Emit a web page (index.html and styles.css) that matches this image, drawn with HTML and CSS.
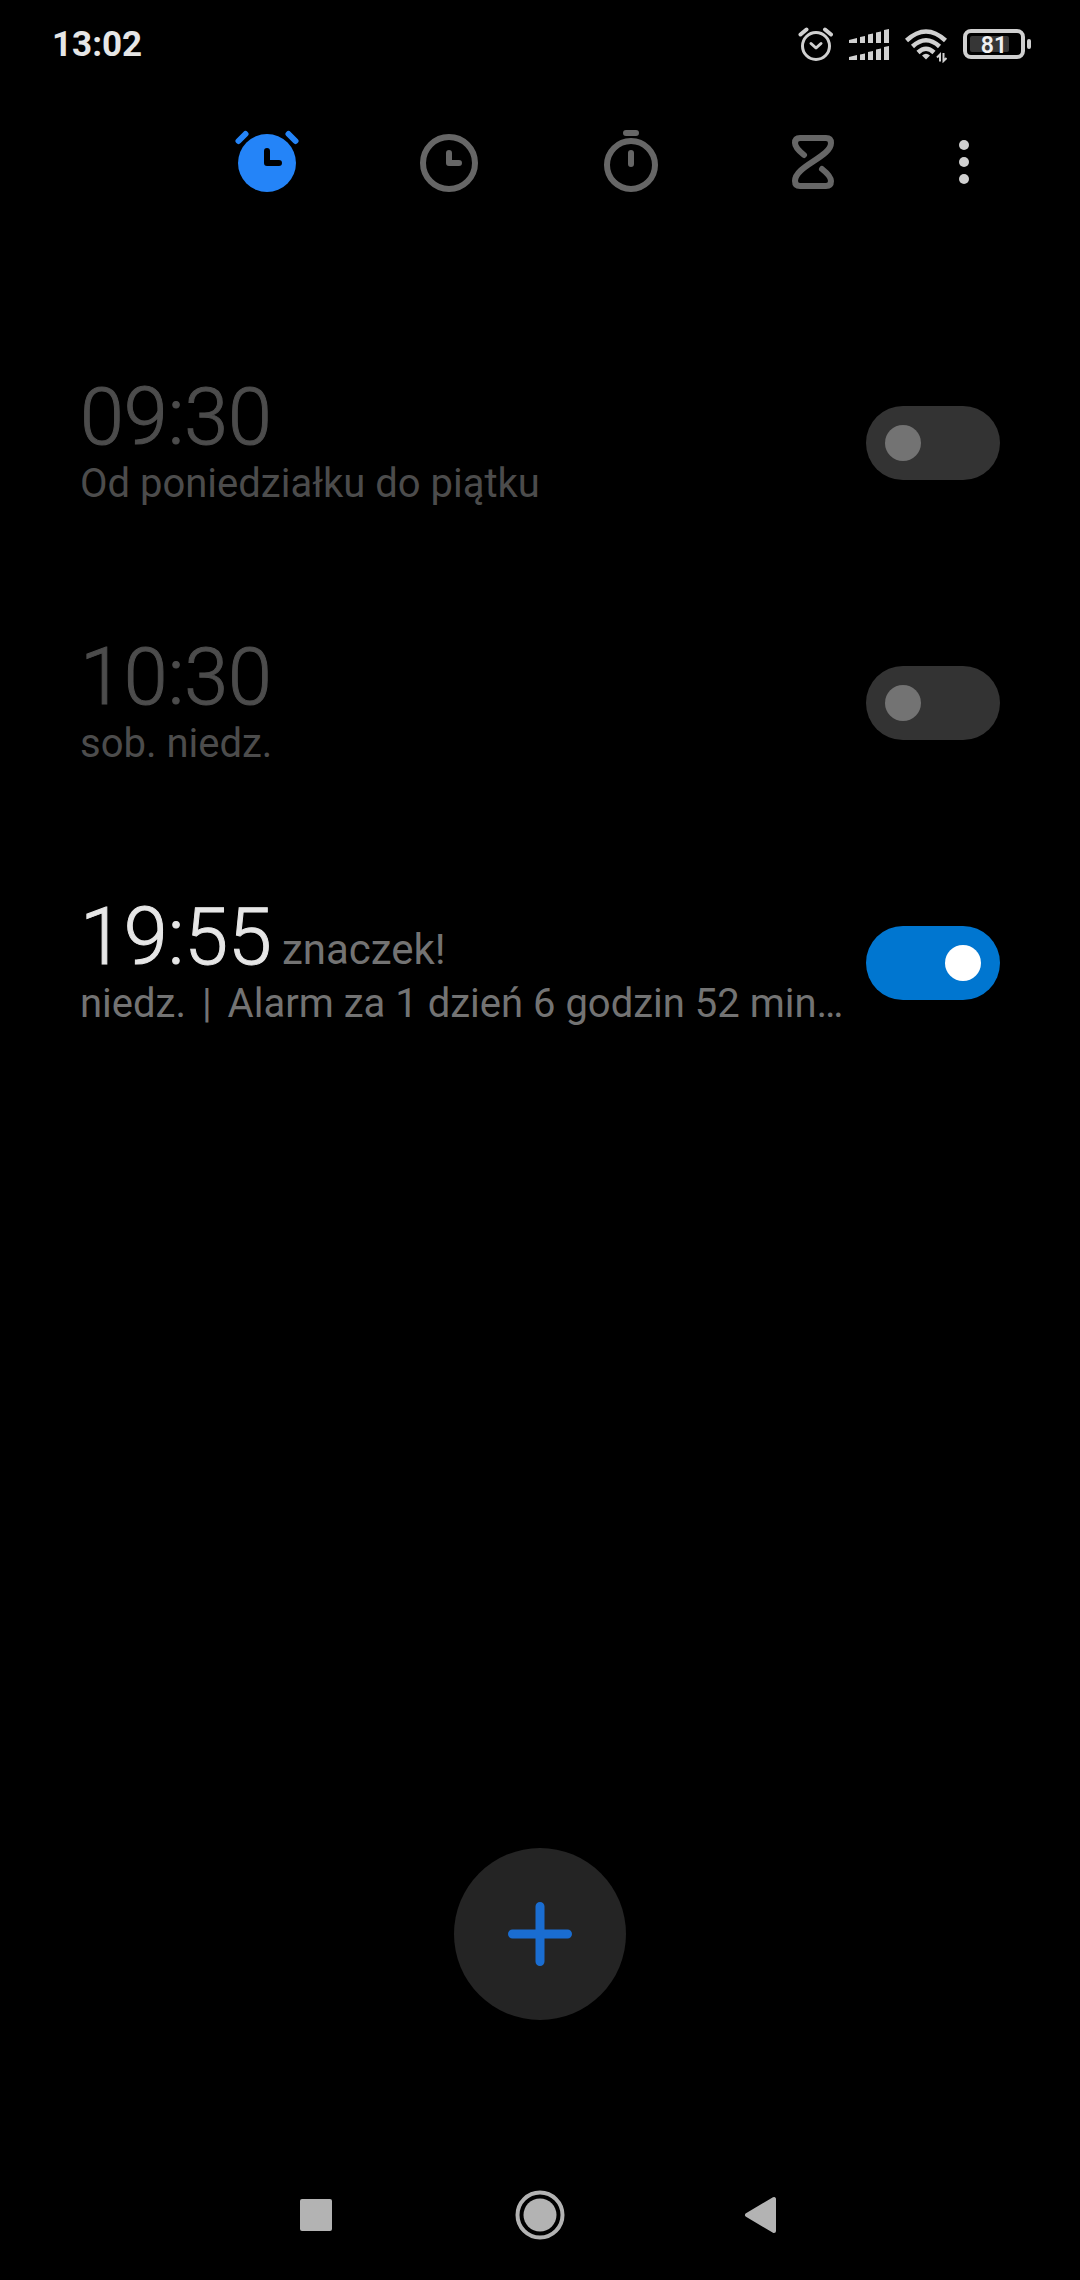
FILE: index.html
```html
<!DOCTYPE html>
<html lang="pl">
<head>
  <meta charset="UTF-8">
  <meta name="viewport" content="width=device-width, initial-scale=1">
  <title>Zegar</title>
  <link rel="stylesheet" href="styles.css">
</head>
<body>

<header class="status-bar">
  <span class="status-time">13:02</span>
  <div class="status-icons">
    <svg width="38" height="36" viewBox="0 0 38 36" fill="none" stroke="#d0d0d0" stroke-width="3" stroke-linecap="round">
      <circle cx="21" cy="19" r="13.5"/>
      <path d="M16 16.500l5 4.500 5-4.500" stroke-linejoin="round"/>
      <path d="M5.500 7.500l6-5M36 7.500l-6-5" stroke-width="4"/>
    </svg>
    <svg width="40" height="36" viewBox="0 0 40 36" fill="#d0d0d0">
      <path d="M0 13l8-2v5H0zM11 10l5-1v7h-5zM19 7.500l5-1V16h-5zM27 5.500l5-1V16h-5zM35 3l5-1v14h-5z"/>
      <path d="M0 30l8-2v5H0zM11 27.500l5-1V33h-5zM19 25l5-1v9h-5zM27 22.500l5-1V33h-5zM35 20l5-1v14h-5z"/>
    </svg>
    <svg width="42" height="36" viewBox="0 0 42 36" fill="none" stroke="#d0d0d0" stroke-width="4.500">
      <path d="M1.500 13.500Q21-4.500 40.500 13.500M7.500 19.500Q21 7 34.500 19.500M13 25.500Q21 18 29 25.500"/>
      <path d="M17 28.500q4-3.500 8 0l-4 4z" fill="#d0d0d0" stroke="none"/>
      <path d="M32 30.500l3-3v7M38.500 26v8l3-3" stroke-width="2"/>
    </svg>
    <svg width="69" height="36" viewBox="0 0 69 36">
      <rect x="2" y="4" width="58" height="26" rx="6" fill="none" stroke="#d0d0d0" stroke-width="4"/>
      <rect x="7" y="9" width="39" height="16" rx="2" fill="#363636"/>
      <rect x="64" y="12" width="4" height="10" rx="2" fill="#d0d0d0"/>
      <text class="battery-level" x="31" y="26" text-anchor="middle">81</text>
    </svg>
  </div>
</header>

<nav class="tabs">
  <button class="tab active" aria-label="Alarm">
    <svg width="72" height="72" viewBox="0 0 72 72" fill="none" stroke-width="6" stroke-linecap="round" stroke-linejoin="round">
      <circle cx="36" cy="36" r="29" fill="currentColor"/>
      <path d="M7.500 14l7-7M64.500 14l-7-7" stroke="currentColor"/>
      <path d="M36 24v12h12" stroke="#000"/>
    </svg>
  </button>
  <button class="tab" aria-label="Zegar">
    <svg width="72" height="72" viewBox="0 0 72 72" fill="none" stroke="currentColor" stroke-width="6" stroke-linecap="round" stroke-linejoin="round">
      <circle cx="36" cy="36" r="26"/>
      <path d="M36 26v10h10"/>
    </svg>
  </button>
  <button class="tab" aria-label="Stoper">
    <svg width="72" height="72" viewBox="0 0 72 72" fill="none" stroke="currentColor" stroke-width="6" stroke-linecap="round">
      <circle cx="36" cy="38" r="24"/>
      <path d="M31 6h10M36 26v11"/>
    </svg>
  </button>
  <button class="tab" aria-label="Minutnik">
    <svg width="72" height="72" viewBox="0 0 72 72" fill="none" stroke="currentColor" stroke-width="6" stroke-linecap="round" stroke-linejoin="round">
      <path d="M27 28C22 24 18 20 18 16Q18 11 23 11H49Q54 11 54 16C54 30 18 39 18 54Q18 59 23 59H49Q54 59 54 54C54 50 50 46 45 42"/>
    </svg>
  </button>
  <button class="tab more" aria-label="Więcej">
    <svg width="72" height="72" viewBox="0 0 72 72" fill="currentColor">
      <circle cx="36" cy="18" r="5"/>
      <circle cx="36" cy="35" r="5"/>
      <circle cx="36" cy="52" r="5"/>
    </svg>
  </button>
</nav>

<main class="alarms">
  <label class="alarm">
    <span class="alarm-text">
      <span class="alarm-head">09:30</span>
      <span class="alarm-days">Od poniedziałku do piątku</span>
    </span>
    <input type="checkbox" class="switch">
  </label>
  <label class="alarm">
    <span class="alarm-text">
      <span class="alarm-head">10:30</span>
      <span class="alarm-days">sob. niedz.</span>
    </span>
    <input type="checkbox" class="switch">
  </label>
  <label class="alarm on">
    <span class="alarm-text">
      <span class="alarm-head">19:55<span class="alarm-name">znaczek!</span></span>
      <span class="alarm-days">niedz. <span class="sep">|</span> Alarm za 1 dzień 6 godzin 52 min…</span>
    </span>
    <input type="checkbox" class="switch" checked>
  </label>
</main>

<button class="add" aria-label="Dodaj alarm">
  <svg width="64" height="64" viewBox="0 0 64 64" stroke="#1a6dd1" stroke-width="9" stroke-linecap="round">
    <path d="M32 4.500v55M4.500 32h55"/>
  </svg>
</button>

<nav class="system-nav">
  <button aria-label="Ostatnie">
    <svg width="50" height="50" viewBox="0 0 50 50" fill="currentColor">
      <rect x="9" y="9" width="32" height="32" rx="2"/>
    </svg>
  </button>
  <button aria-label="Ekran główny">
    <svg width="50" height="50" viewBox="0 0 50 50" fill="currentColor">
      <circle cx="25" cy="25" r="22.500" fill="none" stroke="currentColor" stroke-width="4"/>
      <circle cx="25" cy="25" r="16.500"/>
    </svg>
  </button>
  <button aria-label="Wstecz">
    <svg width="50" height="50" viewBox="0 0 50 50" fill="currentColor" stroke="currentColor" stroke-width="4" stroke-linejoin="round">
      <path d="M8 25L35 9v32z"/>
    </svg>
  </button>
</nav>

</body>
</html>
```

FILE: styles.css
```css
* {
  box-sizing: border-box;
}
body {
  margin: 0;
  min-height: 100vh;
  display: flex;
  flex-direction: column;
  background: #000;
  color: #e6e6e6;
  font-family: Roboto, "Noto Sans", sans-serif;
}
button {
  display: flex;
  align-items: center;
  justify-content: center;
  padding: 0;
  border: none;
  background: none;
  color: inherit;
}
svg {
  display: block;
}

/* status bar */
.status-bar {
  display: flex;
  align-items: center;
  justify-content: space-between;
  height: 90px;
  padding: 0 48px 0 52px;
}
.status-time {
  font-size: 35px;
  font-weight: 700;
  line-height: 42px;
}
.status-icons {
  display: flex;
  gap: 16px;
}
.battery-level {
  font-size: 23px;
  font-weight: 600;
  fill: #f0f0f0;
}

/* tabs */
.tabs {
  display: grid;
  grid-template-columns: repeat(4, 182fr) 120fr;
  height: 146px;
  padding: 0 56px 0 176px;
}
.tab {
  color: #666;
}
.tab.active {
  color: #2484f8;
}
.tab.more {
  color: #d0d0d0;
}

/* alarm list */
.alarms {
  padding: 77px 80px 0;
}
.alarm {
  display: flex;
  align-items: center;
  gap: 16px;
  height: 260px;
  color: #4c4c4c;
}
.alarm-text {
  flex: 1;
  min-width: 0;
  padding-top: 2px;
}
.alarm-head {
  display: block;
  font-size: 79px;
  font-weight: 300;
  line-height: 80px;
  -webkit-text-stroke: 1px;
}
.alarm-name,
.alarm-days {
  font-size: 40px;
  font-weight: 400;
}
.alarm-name {
  margin-left: 10px;
  font-size: 42px;
  line-height: 48px;
  color: #737373;
  -webkit-text-stroke: 0;
}
.alarm-days {
  display: block;
  line-height: 54px;
  white-space: nowrap;
}
.sep {
  margin: 0 6px;
}
.alarm.on .alarm-head {
  color: #e6e6e6;
}
.alarm.on .alarm-days {
  color: #737373;
}

.switch {
  appearance: none;
  display: flex;
  align-items: center;
  flex: none;
  width: 134px;
  height: 74px;
  margin: 0;
  padding: 0 19px;
  border-radius: 37px;
  background: #333;
}
.switch::before {
  content: "";
  width: 36px;
  height: 36px;
  border-radius: 50%;
  background: #737373;
}
.switch:checked {
  justify-content: flex-end;
  background: #0076d0;
}
.switch:checked::before {
  background: #fff;
}

.add {
  width: 172px;
  height: 172px;
  margin: auto auto 130px;
  border-radius: 50%;
  background: #242424;
}

/* bottom navigation */
.system-nav {
  display: grid;
  grid-template-columns: repeat(3, 1fr);
  height: 130px;
  padding: 0 204px;
  color: #b3b3b3;
}
```
